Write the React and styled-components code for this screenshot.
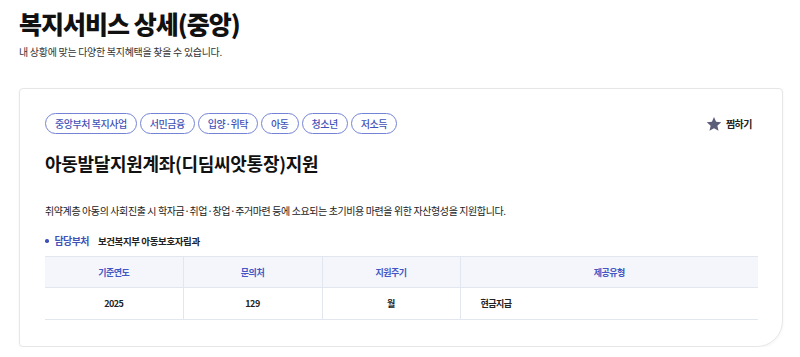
import React from 'react';
import styled, { createGlobalStyle } from 'styled-components';

const GlobalStyle = createGlobalStyle`
  body {
    margin: 0;
    background: #fff;
    font-family: 'Noto Sans CJK KR', 'Noto Sans', sans-serif;
    color: #111;
  }
`;

const Page = styled.div`
  padding: 8px 17px 0 19px;
`;

const PageTitle = styled.h1`
  margin: 0;
  font-size: 25px;
  line-height: 31px;
  font-weight: 800;
  letter-spacing: -1px;
  color: #111;
`;

const PageDesc = styled.p`
  margin: 6px 0 0;
  font-size: 10px;
  line-height: 14px;
  letter-spacing: -0.3px;
  color: #333;
`;

const Card = styled.section`
  margin-top: 29px;
  border: 1px solid #e6e6e6;
  border-radius: 4px 4px 26px 4px;
  box-shadow: 0 1px 3px rgba(0, 0, 0, 0.05);
  padding: 24px 24px 26px 25px;
`;

const TopRow = styled.div`
  display: flex;
  align-items: center;
  justify-content: space-between;
`;

const Tags = styled.div`
  display: flex;
  gap: 3px;
`;

const Tag = styled.span`
  display: inline-block;
  padding: 0 9px;
  border: 1px solid #7483d6;
  border-radius: 11px;
  font-size: 10px;
  line-height: 19px;
  font-weight: 500;
  letter-spacing: -0.45px;
  color: #3f52b8;
`;

const LikeButton = styled.button`
  display: flex;
  align-items: center;
  gap: 4px;
  padding: 0 6px 0 0;
  border: 0;
  background: none;
  font-family: inherit;
  font-size: 10px;
  font-weight: 700;
  letter-spacing: -0.5px;
  color: #222;
  cursor: pointer;
`;

const Title = styled.h2`
  margin: 17px 0 0;
  font-size: 18px;
  line-height: 24px;
  font-weight: 700;
  letter-spacing: -0.3px;
  color: #111;
`;

const Summary = styled.p`
  margin: 28px 0 0;
  font-size: 10px;
  line-height: 16px;
  letter-spacing: -0.4px;
  color: #222;
`;

const DeptRow = styled.div`
  display: flex;
  align-items: center;
  margin-top: 14px;
  line-height: 16px;
  font-weight: 700;
`;

const Dot = styled.span`
  width: 3.5px;
  height: 3.5px;
  border-radius: 50%;
  background: #3f52b8;
  margin-right: 6px;
`;

const DeptLabel = styled.span`
  font-size: 10px;
  letter-spacing: -0.6px;
  color: #3f52b8;
  margin-right: 9px;
`;

const DeptValue = styled.span`
  font-size: 9.5px;
  letter-spacing: -0.4px;
  color: #222;
`;

const Table = styled.table`
  width: 100%;
  margin-top: 7px;
  border-collapse: collapse;
  table-layout: fixed;
  font-size: 9px;
  font-weight: 700;
  letter-spacing: -0.5px;
`;

const Th = styled.th`
  height: 30px;
  padding: 0;
  background: #f4f6fb;
  border-top: 1px solid #e2e6ef;
  border-bottom: 1px solid #e2e6ef;
  color: #4357c4;
  font-weight: 700;
  text-align: center;
  & + & {
    border-left: 1px solid #e2e6ef;
  }
`;

const Td = styled.td`
  height: 31px;
  padding: 0 ${p => (p.$left ? '20px' : '0')};
  border-bottom: 1px solid #e2e6ef;
  color: #222;
  text-align: ${p => (p.$left ? 'left' : 'center')};
  & + & {
    border-left: 1px solid #e2e6ef;
  }
`;

const StarIcon = () => (
  <svg width="16" height="16" viewBox="0 0 24 24">
    <path
      d="M12 1.5l3.1 7.2 7.8.7-5.9 5.2 1.8 7.7L12 18.3l-6.8 4 1.8-7.7L1.1 9.4l7.8-.7z"
      fill="#5a5e78"
    />
  </svg>
);

const tags = ['중앙부처 복지사업', '서민금융', '입양·위탁', '아동', '청소년', '저소득'];

export default function App() {
  return (
    <Page>
      <GlobalStyle />
      <PageTitle>복지서비스 상세(중앙)</PageTitle>
      <PageDesc>내 상황에 맞는 다양한 복지혜택을 찾을 수 있습니다.</PageDesc>
      <Card>
        <TopRow>
          <Tags>
            {tags.map(t => (
              <Tag key={t}>{t}</Tag>
            ))}
          </Tags>
          <LikeButton>
            <StarIcon />
            찜하기
          </LikeButton>
        </TopRow>
        <Title>아동발달지원계좌(디딤씨앗통장)지원</Title>
        <Summary>
          취약계층 아동의 사회진출 시 학자금·취업·창업·주거마련 등에 소요되는 초기비용 마련을 위한 자산형성을 지원합니다.
        </Summary>
        <DeptRow>
          <Dot />
          <DeptLabel>담당부처</DeptLabel>
          <DeptValue>보건복지부 아동보호자립과</DeptValue>
        </DeptRow>
        <Table>
          <colgroup>
            <col style={{ width: 138 }} />
            <col style={{ width: 139 }} />
            <col style={{ width: 138 }} />
            <col />
          </colgroup>
          <thead>
            <tr>
              <Th>기준연도</Th>
              <Th>문의처</Th>
              <Th>지원주기</Th>
              <Th>제공유형</Th>
            </tr>
          </thead>
          <tbody>
            <tr>
              <Td>2025</Td>
              <Td>129</Td>
              <Td>월</Td>
              <Td $left>현금지급</Td>
            </tr>
          </tbody>
        </Table>
      </Card>
    </Page>
  );
}
